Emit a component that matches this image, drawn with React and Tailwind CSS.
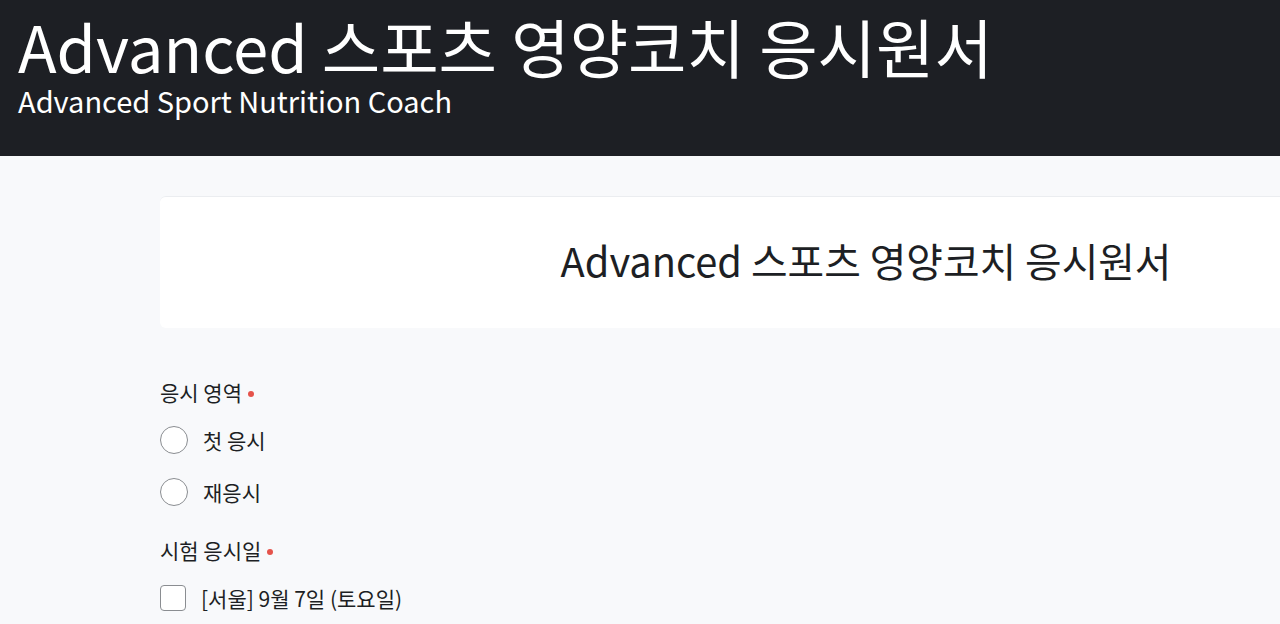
import React from "react";

const font = { fontFamily: '"Noto Sans CJK KR", "Noto Sans", sans-serif' };

const Required = () => (
  <span className="inline-block w-[6px] h-[6px] rounded-full bg-[#e5534b] ml-[6px] align-middle relative top-[-1px]"></span>
);

const Radio = ({ label }) => (
  <label className="flex items-center gap-[15px] h-[28px]">
    <span className="w-[28px] h-[28px] rounded-full border border-[#8a8d91] bg-white shrink-0"></span>
    <span className="text-[21px] text-[#1d1f24] leading-none">{label}</span>
  </label>
);

const Checkbox = ({ label }) => (
  <label className="flex items-center gap-[15px] h-[26px]">
    <span className="w-[26px] h-[26px] rounded-[4px] border border-[#8a8d91] bg-white shrink-0"></span>
    <span className="text-[21px] text-[#1d1f24] leading-none">{label}</span>
  </label>
);

export default function App() {
  return (
    <div className="w-[1280px] h-[624px] overflow-hidden bg-[#f8f9fb]" style={font}>
      {/* Header */}
      <header className="h-[156px] bg-[#1d1f24] text-white pl-[18px] pt-[8px]">
        <h1 className="text-[63.5px] leading-[74px] whitespace-nowrap">
          Advanced 스포츠 영양코치 응시원서
        </h1>
        <p className="text-[29px] leading-[36px] whitespace-nowrap">
          Advanced Sport Nutrition Coach
        </p>
      </header>

      {/* Content */}
      <main className="pl-[160px] pt-[40px]">
        <div className="w-[1412px] h-[132px] bg-white rounded-[6px] border-t border-[#ebedf0] flex items-center justify-center pb-[6px]">
          <h2 className="text-[39.8px] text-[#1d1f24] whitespace-nowrap">
            Advanced 스포츠 영양코치 응시원서
          </h2>
        </div>

        <section className="mt-[50px]">
          <div className="text-[21px] text-[#1d1f24] leading-[28px]">
            응시 영역
            <Required />
          </div>
          <div className="mt-[20px] flex flex-col gap-[24px]">
            <Radio label="첫 응시" />
            <Radio label="재응시" />
          </div>
        </section>

        <section className="mt-[30px]">
          <div className="text-[21px] text-[#1d1f24] leading-[28px]">
            시험 응시일
            <Required />
          </div>
          <div className="mt-[21px] flex flex-col gap-[24px]">
            <Checkbox label="[서울] 9월 7일 (토요일)" />
          </div>
        </section>
      </main>
    </div>
  );
}
